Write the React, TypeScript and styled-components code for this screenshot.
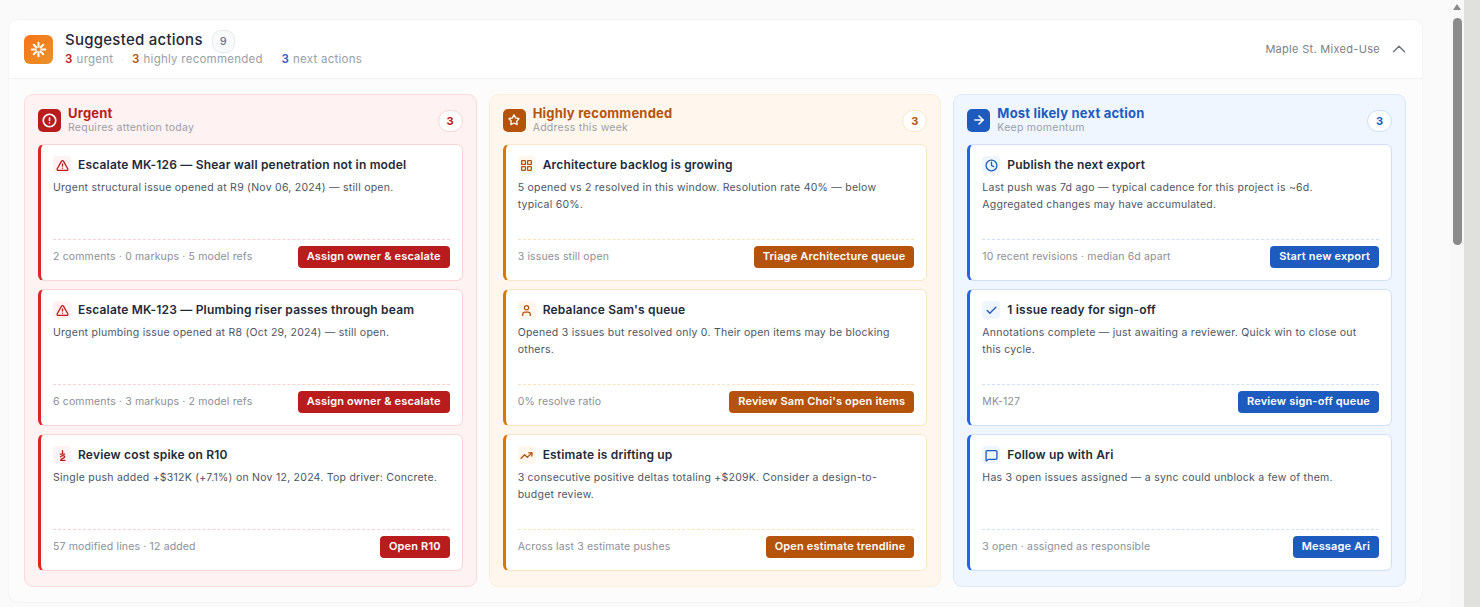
import React from "react";
import styled, { createGlobalStyle } from "styled-components";
import { TriangleAlert, CircleAlert, Star, ArrowRight, LayoutGrid, User, TrendingUp, Clock, Check, MessageSquare, ChevronUp, LucideIcon } from "lucide-react";

type Tone = "red" | "amber" | "blue";
const tones: Record<Tone, { main: string; bar: string; bg: string; border: string; cardBorder: string; soft: string; dash: string }> = {
  red: { main: "#b91c1c", bar: "#dc2626", bg: "#fef2f2", border: "#fbdada", cardBorder: "#f9d5d5", soft: "#fef2f2", dash: "#fbd0d0" },
  amber: { main: "#b45309", bar: "#d97706", bg: "#fff7ed", border: "#fdeeda", cardBorder: "#fbe6c8", soft: "#fff7ed", dash: "#fde3bd" },
  blue: { main: "#1d5bbf", bar: "#2563eb", bg: "#eff6ff", border: "#dbe8fb", cardBorder: "#cfe0f8", soft: "#eff6ff", dash: "#cfe2fa" },
};

const Global = createGlobalStyle`
  html, body { margin: 0; padding: 0; height: 607px; overflow: hidden; background: #fafafa; }
  body { font-family: Inter, "Liberation Sans", sans-serif; color: #1f2937; }
`;
const Page = styled.div`display: flex; width: 1480px; height: 607px; overflow: hidden;`;
const Main = styled.main`flex: 1; padding: 19px 27px 0 8px; min-width: 0;`;
const Track = styled.div`width: 14px; background: #f8f8f8; display: flex; flex-direction: column; align-items: center; padding: 4px 0 0;`;
const UpArrow = styled.div`width: 0; height: 0; border-left: 4.5px solid transparent; border-right: 4.5px solid transparent; border-bottom: 6px solid #8a8a8a; margin-bottom: 8px;`;
const Thumb = styled.div`width: 9px; height: 227px; border-radius: 5px; background: #8b8b8b;`;
const Edge = styled.div`width: 16px; background: #e0e0dc;`;

const Panel = styled.section`width: 1415px; height: 584px; box-sizing: border-box; background: #fcfcfc; border: 1px solid #f3f4f6; border-radius: 10px; overflow: hidden;`;
const TopBar = styled.header`height: 59px; box-sizing: border-box; background: #fff; border-bottom: 1px solid #f1f2f4; display: flex; align-items: center; padding: 0 12px 0 15px;`;
const LogoTile = styled.div`width: 29px; height: 29px; border-radius: 6px; background: linear-gradient(135deg, #f97316, #e8932a); display: flex; align-items: center; justify-content: center; margin-right: 12px;`;
const TopText = styled.div`display: flex; flex-direction: column; flex: 1;`;
const TitleRow = styled.div`display: flex; align-items: center; gap: 9px; height: 22px; margin-top: -1px;`;
const PanelTitle = styled.h1`margin: 0 0 3px; font-size: 15px; font-weight: 500; color: #1f2937; letter-spacing: 0.25px;`;
const CountChip = styled.span`width: 23px; height: 23px; box-sizing: border-box; border: 1.5px solid #e8eaee; background: #f9fafb; border-radius: 9px; display: flex; align-items: center; justify-content: center; font-size: 11px; font-weight: 500; color: #6b7280;`;
const Stats = styled.div`display: flex; align-items: center; font-size: 11.5px; color: #9a9ea6; height: 16px; margin-top: -1px; letter-spacing: 0.25px;`;
const StatNum = styled.b<{ $tone: Tone }>`font-weight: 600; color: ${p => tones[p.$tone].main}; margin-right: 4px;`;
const Dot = styled.span`margin: 0 8px 0 7.5px; color: #dfe2e6; font-size: 10px;`;
const Project = styled.span`font-size: 11px; font-weight: 400; color: #7b7f86; letter-spacing: 0.3px; margin-right: 8px;`;

const Columns = styled.div`display: grid; grid-template-columns: repeat(3, 1fr); column-gap: 12px; padding: 15px 16px 0 15px;`;
const Column = styled.div<{ $tone: Tone }>`height: 493px; box-sizing: border-box; border-radius: 9px; padding: 8px 13px 14px 13px; background: ${p => tones[p.$tone].bg}; border: 1px solid ${p => tones[p.$tone].border}; display: flex; flex-direction: column;`;
const ColHead = styled.div`display: flex; align-items: center; height: 36px; flex: none; margin-bottom: 6px;`;
const ColIcon = styled.div<{ $tone: Tone }>`width: 23px; height: 23px; border-radius: 5px; display: flex; align-items: center; justify-content: center; background: ${p => tones[p.$tone].main}; margin-right: 7px; margin-top: -2px;`;
const ColText = styled.div`flex: 1; display: flex; flex-direction: column; margin-top: -1px;`;
const ColTitle = styled.div<{ $tone: Tone }>`font-size: 13px; line-height: 15px; font-weight: 700; color: ${p => tones[p.$tone].main}; letter-spacing: 0.2px;`;
const ColSub = styled.div`font-size: 10.5px; line-height: 14px; color: #9a9ea6; letter-spacing: 0.25px;`;
const ColCount = styled.div<{ $tone: Tone }>`width: 25px; height: 22px; box-sizing: border-box; border-radius: 11px; background: #fff; border: 1px solid ${p => tones[p.$tone].cardBorder}; color: ${p => tones[p.$tone].main}; font-size: 11px; font-weight: 700; display: flex; align-items: center; justify-content: center;`;

const CardList = styled.div`display: flex; flex-direction: column; gap: 8px; margin-top: -1px;`;
const Card = styled.article<{ $tone: Tone }>`height: 137px; box-sizing: border-box; background: #fff; border: 1px solid ${p => tones[p.$tone].cardBorder}; border-left: 3px solid ${p => tones[p.$tone].bar}; border-radius: 6px; padding: 11px 12px 12px 12px; display: flex; flex-direction: column;`;
const CardHead = styled.div`display: flex; align-items: center; height: 18px; gap: 7px;`;
const CardIcon = styled.div<{ $tone: Tone }>`width: 18px; height: 18px; border-radius: 4px; background: ${p => tones[p.$tone].soft}; display: flex; align-items: center; justify-content: center; flex: none;`;
const CardTitle = styled.h3`margin: 0 0 2px; font-size: 12px; font-weight: 600; color: #1e2a38; letter-spacing: 0.18px; white-space: nowrap;`;
const Body = styled.p`margin: 5px 0 0; padding-right: 8px; font-size: 10.5px; line-height: 17px; color: #4b5563; letter-spacing: 0.25px; flex: 1;`;
const Foot = styled.div<{ $tone: Tone }>`box-sizing: border-box; display: flex; align-items: center; justify-content: space-between; border-top: 1px dashed ${p => tones[p.$tone].dash}; padding-top: 6px; height: 29px;`;
const Meta = styled.span`font-size: 10.5px; color: #8b8f96; letter-spacing: 0.15px; white-space: nowrap; margin-top: -2px;`;
const Action = styled.button<{ $tone: Tone }>`height: 22px; border: 0; border-radius: 4px; padding: 0 9px 2px; background: ${p => tones[p.$tone].main}; color: #fff; font-family: inherit; font-size: 11px; font-weight: 600; letter-spacing: 0.16px; white-space: nowrap;`;

type IconProps = { size?: number; color?: string; strokeWidth?: number };
type IconLike = LucideIcon | ((p: IconProps) => React.ReactElement);
type Item = { icon: IconLike; title: string; body: string; meta: string; action: string };
type Col = { tone: Tone; icon: LucideIcon; iconSize: number; title: string; sub: string; items: Item[] };

function CostSpike({ size, color, strokeWidth }: IconProps) {
  return (
    <svg width={size} height={size} viewBox="0 0 24 24" fill="none" stroke={color} strokeWidth={strokeWidth} strokeLinecap="round" strokeLinejoin="round">
      <path d="M12 3v5" />
      <path d="M8 9.5h8" />
      <path d="M8.5 14.5c1.5-3 7.5-3 7.5 0 0 3-7.5 3-7.5 6.5h8" />
    </svg>
  );
}

const columns: Col[] = [
  { tone: "red", icon: CircleAlert, iconSize: 15, title: "Urgent", sub: "Requires attention today", items: [
    { icon: TriangleAlert, title: "Escalate MK-126 — Shear wall penetration not in model", body: "Urgent structural issue opened at R9 (Nov 06, 2024) — still open.", meta: "2 comments · 0 markups · 5 model refs", action: "Assign owner & escalate" },
    { icon: TriangleAlert, title: "Escalate MK-123 — Plumbing riser passes through beam", body: "Urgent plumbing issue opened at R8 (Oct 29, 2024) — still open.", meta: "6 comments · 3 markups · 2 model refs", action: "Assign owner & escalate" },
    { icon: CostSpike, title: "Review cost spike on R10", body: "Single push added +$312K (+7.1%) on Nov 12, 2024. Top driver: Concrete.", meta: "57 modified lines · 12 added", action: "Open R10" },
  ]},
  { tone: "amber", icon: Star, iconSize: 12, title: "Highly recommended", sub: "Address this week", items: [
    { icon: LayoutGrid, title: "Architecture backlog is growing", body: "5 opened vs 2 resolved in this window. Resolution rate 40% — below typical 60%.", meta: "3 issues still open", action: "Triage Architecture queue" },
    { icon: User, title: "Rebalance Sam's queue", body: "Opened 3 issues but resolved only 0. Their open items may be blocking others.", meta: "0% resolve ratio", action: "Review Sam Choi's open items" },
    { icon: TrendingUp, title: "Estimate is drifting up", body: "3 consecutive positive deltas totaling +$209K. Consider a design-to-budget review.", meta: "Across last 3 estimate pushes", action: "Open estimate trendline" },
  ]},
  { tone: "blue", icon: ArrowRight, iconSize: 14, title: "Most likely next action", sub: "Keep momentum", items: [
    { icon: Clock, title: "Publish the next export", body: "Last push was 7d ago — typical cadence for this project is ~6d. Aggregated changes may have accumulated.", meta: "10 recent revisions · median 6d apart", action: "Start new export" },
    { icon: Check, title: "1 issue ready for sign-off", body: "Annotations complete — just awaiting a reviewer. Quick win to close out this cycle.", meta: "MK-127", action: "Review sign-off queue" },
    { icon: MessageSquare, title: "Follow up with Ari", body: "Has 3 open issues assigned — a sync could unblock a few of them.", meta: "3 open · assigned as responsible", action: "Message Ari" },
  ]},
];

function Burst() {
  const spokes = [0, 45, 90, 135, 180, 225, 270, 315];
  return (
    <svg width="17" height="17" viewBox="0 0 24 24" stroke="#fff" strokeWidth="2.8" strokeLinecap="round">
      {spokes.map(a => <line key={a} x1="12" y1="2.5" x2="12" y2="8" transform={`rotate(${a} 12 12)`} />)}
    </svg>
  );
}

export default function App() {
  return (
    <Page>
      <Global />
      <Main>
        <Panel>
          <TopBar>
            <LogoTile><Burst /></LogoTile>
            <TopText>
              <TitleRow><PanelTitle>Suggested actions</PanelTitle><CountChip>9</CountChip></TitleRow>
              <Stats>
                <StatNum $tone="red">3</StatNum>urgent<Dot>·</Dot>
                <StatNum $tone="amber">3</StatNum>highly recommended<Dot>·</Dot>
                <StatNum $tone="blue">3</StatNum>next actions
              </Stats>
            </TopText>
            <Project>Maple St. Mixed-Use</Project>
            <ChevronUp size={22} color="#6b7280" strokeWidth={1.5} />
          </TopBar>
          <Columns>
            {columns.map(c => (
              <Column key={c.title} $tone={c.tone}>
                <ColHead>
                  <ColIcon $tone={c.tone}><c.icon size={c.iconSize} color="#fff" strokeWidth={2.6} /></ColIcon>
                  <ColText><ColTitle $tone={c.tone}>{c.title}</ColTitle><ColSub>{c.sub}</ColSub></ColText>
                  <ColCount $tone={c.tone}>{c.items.length}</ColCount>
                </ColHead>
                <CardList>
                  {c.items.map(it => (
                    <Card key={it.title} $tone={c.tone}>
                      <CardHead>
                        <CardIcon $tone={c.tone}><it.icon size={13} color={tones[c.tone].main} strokeWidth={2.4} /></CardIcon>
                        <CardTitle>{it.title}</CardTitle>
                      </CardHead>
                      <Body>{it.body}</Body>
                      <Foot $tone={c.tone}><Meta>{it.meta}</Meta><Action $tone={c.tone}>{it.action}</Action></Foot>
                    </Card>
                  ))}
                </CardList>
              </Column>
            ))}
          </Columns>
        </Panel>
      </Main>
      <Track><UpArrow /><Thumb /></Track>
      <Edge />
    </Page>
  );
}
